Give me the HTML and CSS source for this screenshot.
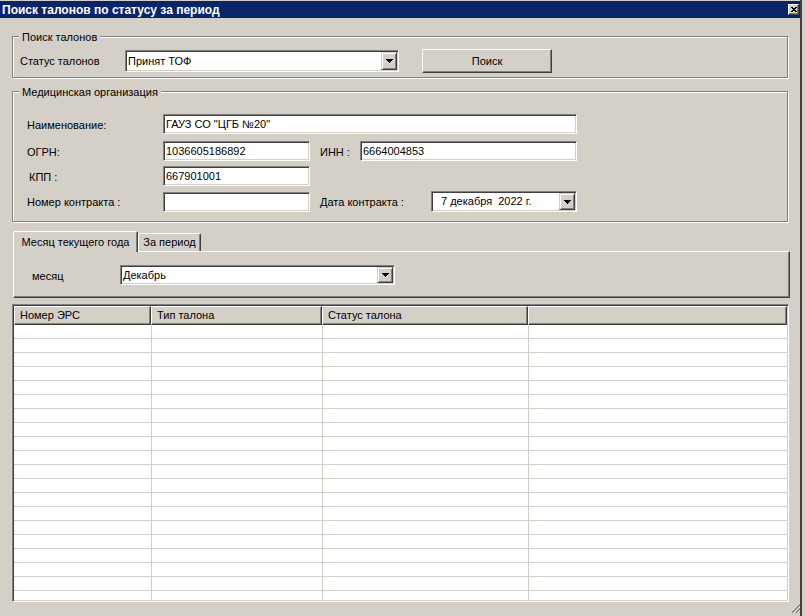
FILE: index.html
```html
<!DOCTYPE html>
<html lang="ru">
<head>
<meta charset="utf-8">
<title>Поиск талонов по статусу за период</title>
<link rel="stylesheet" href="styles.css">
</head>
<body>
<div class="window">
  <div class="titlebar">
    <span class="title">Поиск талонов по статусу за период</span>
    <span class="close"><svg width="6" height="5" viewBox="0 0 6 5"><path d="M0 0h2v1H0zM4 0h2v1H4zM1 1h4v1H1zM2 2h2v1H2zM1 3h4v1H1zM0 4h2v1H0zM4 4h2v1H4z" fill="#000"/></svg></span>
  </div>

  <div class="group g-search">
    <span class="legend">Поиск талонов</span>
    <div class="row">
      <span class="w-status">Статус талонов</span>
      <div class="combo c-status">
        <span class="combo-text">Принят ТОФ</span>
        <span class="drop"><svg width="7" height="4" viewBox="0 0 7 4"><path d="M0 0h7v1H0zM1 1h5v1H1zM2 2h3v1H2zM3 3h1v1H3z" fill="#000"/></svg></span>
      </div>
      <div class="btn">Поиск</div>
    </div>
  </div>

  <div class="group g-org">
    <span class="legend">Медицинская организация</span>
    <div class="form">
      <div class="frow r1">
        <span class="lbl lcol">Наименование:</span>
        <div class="field f-wide">ГАУЗ СО "ЦГБ №20"</div>
      </div>
      <div class="frow">
        <span class="lbl lcol">ОГРН:</span>
        <div class="field f-mid">1036605186892</div>
        <span class="lbl l-inn">ИНН :</span>
        <div class="field f-inn">6664004853</div>
      </div>
      <div class="frow">
        <span class="lbl lcol l-kpp">КПП :</span>
        <div class="field f-mid">667901001</div>
      </div>
      <div class="frow">
        <span class="lbl lcol">Номер контракта :</span>
        <div class="field f-mid"></div>
        <span class="lbl l-date">Дата контракта :</span>
        <div class="combo c-date">
          <span class="combo-text date-text">7 декабря  2022 г.</span>
          <span class="drop"><svg width="7" height="4" viewBox="0 0 7 4"><path d="M0 0h7v1H0zM1 1h5v1H1zM2 2h3v1H2zM3 3h1v1H3z" fill="#000"/></svg></span>
        </div>
      </div>
    </div>
  </div>

  <div class="tabs">
    <div class="tab tab-1">Месяц текущего года</div>
    <div class="tab tab-2">За период</div>
  </div>
  <div class="panel">
    <span class="l-month">месяц</span>
    <div class="combo c-month">
      <span class="combo-text">Декабрь</span>
      <span class="drop"><svg width="7" height="4" viewBox="0 0 7 4"><path d="M0 0h7v1H0zM1 1h5v1H1zM2 2h3v1H2zM3 3h1v1H3z" fill="#000"/></svg></span>
    </div>
  </div>

  <div class="grid">
    <div class="ghead">
      <div class="hc c1">Номер ЭРС</div>
      <div class="hc c2">Тип талона</div>
      <div class="hc c3">Статус талона</div>
      <div class="hc c4"></div>
    </div>
    <div class="gbody">
      <div class="bc c1"></div>
      <div class="bc c2"></div>
      <div class="bc c3"></div>
      <div class="bc c4"></div>
    </div>
  </div>

  <svg class="grip" width="12" height="12" viewBox="0 0 12 12">
    <line x1="0" y1="12" x2="12" y2="0" stroke="#fff" stroke-width="0.9"/>
    <line x1="1.5" y1="12" x2="12" y2="1.5" stroke="#808080" stroke-width="1.5"/>
    <line x1="4" y1="12" x2="12" y2="4" stroke="#fff" stroke-width="0.9"/>
    <line x1="5.5" y1="12" x2="12" y2="5.5" stroke="#808080" stroke-width="1.5"/>
    <line x1="8" y1="12" x2="12" y2="8" stroke="#fff" stroke-width="0.9"/>
    <line x1="9.5" y1="12" x2="12" y2="9.5" stroke="#808080" stroke-width="1.5"/>
  </svg>
</div>
</body>
</html>
```

FILE: styles.css
```css
* { box-sizing: border-box; }

body {
  margin: 0;
  background: #d4d0c8;
  font-family: "Liberation Sans", Arial, sans-serif;
  font-size: 11px;
  line-height: 13px;
  color: #000;
}

.window {
  position: relative;
  width: 802px;
  height: 616px;
  padding-top: 1px;
  border-right: 2px solid #404040;
  display: flex;
  flex-direction: column;
  overflow: hidden;
}

/* title bar */
.titlebar {
  height: 17px;
  flex: none;
  background: #0a246a;
  color: #fff;
  font-weight: bold;
  display: flex;
  align-items: center;
  justify-content: space-between;
  padding: 0 1px 0 2px;
}

.title {
  font-size: 12px;
  padding-top: 2px;
  white-space: nowrap;
}

.close {
  width: 11px;
  height: 11px;
  display: flex;
  align-items: center;
  justify-content: center;
  background: #d4d0c8;
  border: 1px solid;
  border-color: #fff #404040 #404040 #fff;
  box-shadow: inset -1px -1px 0 #808080;
}

/* group boxes */
.group {
  position: relative;
  flex: none;
  margin-left: 12px;
  width: 776px;
  border: 1px solid #808080;
  box-shadow: 1px 1px 0 #fff, inset 1px 1px 0 #fff;
}

.legend {
  position: absolute;
  top: -6px;
  left: 6px;
  padding: 0 3px;
  background: #d4d0c8;
  white-space: nowrap;
}

.g-search {
  margin-top: 18px;
  height: 42px;
  padding: 12px 0 0 7px;
}

.row {
  display: flex;
  align-items: center;
}

.w-status { width: 105px; }

/* combos */
.combo {
  display: flex;
  background: #fff;
  border: 1px solid;
  border-color: #808080 #fff #fff #808080;
  box-shadow: inset 1px 1px 0 #404040, inset -1px -1px 0 #d4d0c8;
  padding: 1px;
}

.combo-text {
  flex: 1;
  display: flex;
  align-items: center;
  padding-left: 1px;
  white-space: pre;
  overflow: hidden;
}

.drop {
  width: 16px;
  flex: none;
  display: flex;
  align-items: center;
  justify-content: center;
  background: #d4d0c8;
  border: 1px solid;
  border-color: #d4d0c8 #404040 #404040 #d4d0c8;
  box-shadow: inset 1px 1px 0 #fff, inset -1px -1px 0 #808080;
}

.c-status { width: 274px; height: 22px; }
.c-date { width: 146px; height: 21px; }
.c-month { width: 275px; height: 20px; }
.date-text { padding-left: 8px; }

.btn {
  margin-left: 23px;
  width: 130px;
  height: 24px;
  display: flex;
  align-items: center;
  justify-content: center;
  border: 1px solid;
  border-color: #fff #404040 #404040 #fff;
  box-shadow: inset -1px -1px 0 #808080;
}

/* organisation form */
.g-org {
  margin-top: 13px;
  height: 131px;
  padding: 22px 0 0 14px;
}

.form {
  display: flex;
  flex-direction: column;
  gap: 5px;
}

.frow {
  display: flex;
  align-items: center;
}

.r1 { margin-bottom: 2px; }

.lbl { padding-top: 2px; white-space: nowrap; }
.lcol { width: 136px; }
.l-kpp { padding-left: 2px; }
.l-inn { margin-left: 10px; width: 40px; }
.l-date { margin-left: 10px; width: 111px; }

.field {
  height: 20px;
  display: flex;
  align-items: center;
  background: #fff;
  border: 1px solid;
  border-color: #808080 #fff #fff #808080;
  box-shadow: inset 1px 1px 0 #404040, inset -1px -1px 0 #d4d0c8;
  padding: 0 0 0 2px;
  white-space: pre;
}

.f-wide { width: 414px; }
.f-mid { width: 147px; }
.f-inn { width: 217px; }

/* tabs */
.tabs {
  flex: none;
  display: flex;
  align-items: flex-end;
  height: 20px;
  margin: 9px 0 0 13px;
}

.tab {
  background: #d4d0c8;
  border: 1px solid;
  border-bottom: none;
  border-color: #fff #404040 transparent #fff;
  box-shadow: inset -1px 0 0 #808080;
  border-radius: 2px 2px 0 0;
  display: flex;
  align-items: center;
  justify-content: center;
  white-space: nowrap;
}

.tab-1 {
  width: 125px;
  height: 21px;
  margin-bottom: -1px;
  position: relative;
  z-index: 1;
}

.tab-2 {
  width: 63px;
  height: 18px;
}

.panel {
  flex: none;
  margin-left: 13px;
  width: 777px;
  height: 47px;
  border: 1px solid;
  border-color: #fff #404040 #404040 #fff;
  box-shadow: inset -1px -1px 0 #808080;
  display: flex;
  align-items: flex-start;
  padding: 13px 0 0 18px;
}

.l-month { width: 88px; margin-top: 5px; }

/* list view */
.grid {
  flex: none;
  margin: 6px 0 0 12px;
  width: 777px;
  height: 298px;
  border: 1px solid;
  border-color: #808080 #fff #fff #808080;
  box-shadow: inset 1px 1px 0 #404040, inset -1px -1px 0 #d4d0c8;
  padding: 1px;
  display: flex;
  flex-direction: column;
  overflow: hidden;
}

.ghead {
  flex: none;
  display: flex;
  height: 19px;
}

.hc {
  background: #d4d0c8;
  border: 1px solid;
  border-color: #fff #404040 #404040 #fff;
  box-shadow: inset -1px -1px 0 #808080;
  padding-left: 5px;
  display: flex;
  align-items: center;
  white-space: nowrap;
}

.c1 { width: 137px; }
.c2 { width: 171px; }
.c3 { width: 206px; }
.c4 { width: 259px; }

.gbody {
  flex: 1;
  display: flex;
  background: repeating-linear-gradient(to bottom, #fff 0, #fff 13px, #d4d0c8 13px, #d4d0c8 14px);
}

.bc { border-left: 1px solid #d4d0c8; }
.bc.c1 { border-left: none; }

.grip {
  position: absolute;
  right: -2px;
  bottom: 3px;
}
```
